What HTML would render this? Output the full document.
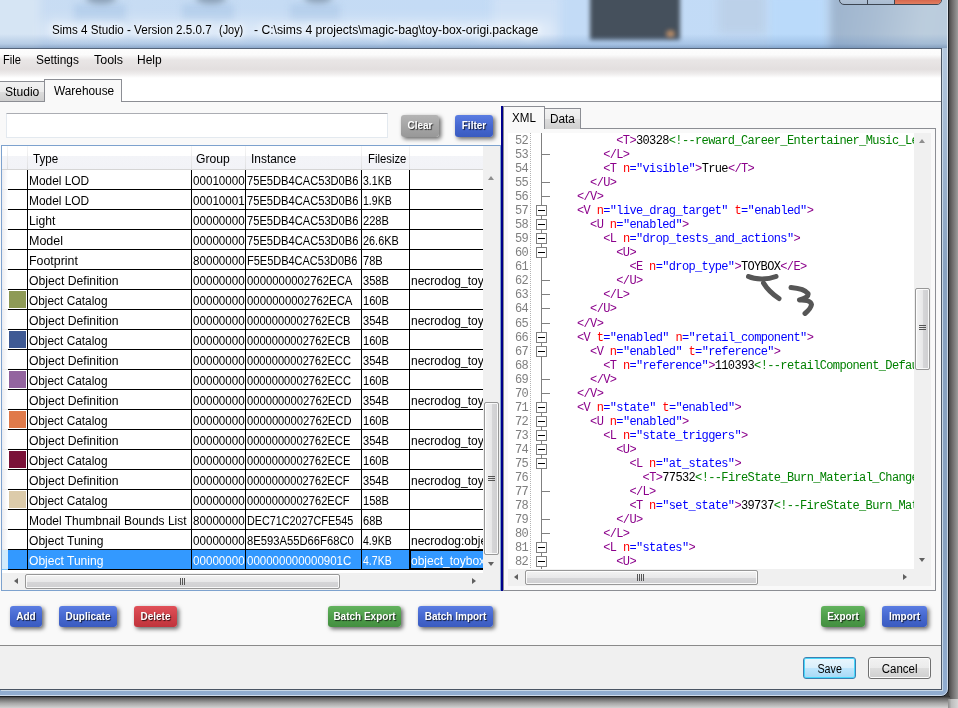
<!DOCTYPE html>
<html lang="en"><head><meta charset="utf-8"><title>Sims 4 Studio</title>
<style>
*{box-sizing:border-box}
html,body{margin:0;padding:0}
body{width:958px;height:708px;overflow:hidden;position:relative;background:#fff;font-family:"Liberation Sans",sans-serif;font-size:12px;color:#000}
.abs,.abs>div,.abs>span{position:absolute}
#root{position:absolute;left:0;top:0;width:958px;height:708px;overflow:hidden;will-change:transform}
#desk{left:0;top:0;width:958px;height:708px;background:#fdfdfd}
#shr{left:948px;top:0;width:10px;height:699px;background:linear-gradient(90deg,#404040,#6a6868 40%,#9c9c9c)}
#shb{left:0;top:696px;width:950px;height:12px;background:linear-gradient(180deg,#2a2a2a,#686868 22%,#a6a6a6 60%,#d2d2d2)}
#frame{left:-10px;top:-30px;width:959px;height:727px;border-radius:8px;border:1px solid #1b1f24;background:linear-gradient(180deg,#b9cde0 0,#b4c8de 78px,#88a2c0 300px,#88a2c0 80%,#91add0 100%);overflow:hidden}
#frame .in{left:0;top:0;right:0;bottom:0;border:1px solid rgba(255,255,255,.55);border-radius:7px}
#glass{left:0;top:0;width:947px;height:48px;overflow:hidden;background:linear-gradient(90deg,#c9ddf3 0,#c5dbf4 30%,#c3dbf6 60%,#c1dbf7 100%)}
.bl{filter:blur(5px)}
#title{left:52px;top:23px;white-space:pre;font-size:12px;line-height:15px;color:#000;text-shadow:0 0 6px #fff,0 0 10px #fff,0 0 14px #fff}
#capb{left:839px;top:-14px;width:103px;height:19px;border:1px solid #3d4652;border-radius:0 0 5px 5px;overflow:hidden;background:linear-gradient(180deg,#c9d6e6,#a9bbd0)}
#capb div{top:0;height:19px}
#client{left:0;top:48px;width:942px;height:642px;background:#f9f9f9;border-top:1px solid #56657a;border-right:1px solid #4a5564;border-bottom:1px solid #4a5564;box-shadow:1px 1px 0 #c8d8e6;overflow:hidden}
#menu{left:0;top:0;width:941px;height:29px;background:linear-gradient(180deg,#fdfdfd 0,#fbfbfb 20%,#e9e6e6 38%,#e3dfdf 70%,#eeecec 85%,#ffffff 100%)}
.mi{top:4px;line-height:15px;font-size:12px;white-space:pre}
#tabstrip{left:0;top:29px;width:941px;height:24px;background:#fff}
.tab{border:1px solid #8c8e94;border-bottom:none;font-size:12px;line-height:15px;white-space:pre}
.tab.off{background:linear-gradient(180deg,#f2f2f2 0,#ebebeb 50%,#dddddd 50%,#cfcfcf 100%)}
.tab.on{background:#f9f9f9}
.btn{height:21px;border-radius:3px;color:#fff;font-weight:bold;font-size:10px;line-height:21px;text-align:center;white-space:pre;box-shadow:2px 2px 4px rgba(0,0,0,.6);text-shadow:1px 1px 1px rgba(0,0,0,.75)}
.btn.b{background:linear-gradient(180deg,#5b7de2 0,#4668d0 50%,#3a5bc0 100%)}
.btn.r{background:linear-gradient(180deg,#e05058 0,#cf4048 50%,#c0343c 100%)}
.btn.gn{background:linear-gradient(180deg,#63b35e 0,#4f9e4b 50%,#438f40 100%)}
.btn.gy{background:linear-gradient(180deg,#b5b5b5 0,#a5a5a5 50%,#989898 100%)}
#grid{left:1px;top:96px;width:500px;height:446px;border:1px solid #7da2ce;background:#fff;overflow:hidden}
#ghead{left:0;top:0;width:481px;height:24px;background:linear-gradient(180deg,#fff 0,#fff 42%,#f3f4f8 43%,#f2f3f7 100%);border-bottom:1px solid #d5d5d5}
#ghead span{top:6px;line-height:15px;white-space:pre}
#ghead i{position:absolute;top:0;width:1px;height:23px;background:linear-gradient(180deg,#f6f6f6,#dedfe1)}
.row{left:0;width:481px;height:20px;overflow:hidden}
.row span{top:0;height:20px;line-height:20px;padding-top:1px;white-space:pre;border-right:1px solid #000;border-bottom:1px solid #000;padding-left:1px;overflow:hidden}
em{display:inline-block;font-style:normal;transform-origin:0 50%;white-space:pre}
.row .rh{left:0;width:6px;border-right:none;border-bottom:1px solid #ececec;background:linear-gradient(90deg,#ececf0,#f6f6f8 50%,#fff);padding:0}
.row .c0{left:6px;width:20px;padding:0}
.row .c1{left:26px;width:164px}
.row .c2{left:190px;width:54px;padding-left:0.5px}
.row .c3{left:244px;width:116px}
.row .c4{left:360px;width:48px}
.row .c5{left:408px;width:73px;border-right:none}
.row .sw{left:7px;top:1px;width:17px;height:17px;border:none;padding:0}
.row.sel span{background:#3399ff;color:#fff}
.row.sel .rh{background:#d2ebfb;border-bottom-color:#7fc4f5}
.sbv{background:#f0f0f0}
.thumbv{border:1px solid #979797;border-radius:2px;box-shadow:inset 0 0 0 1px rgba(255,255,255,.85);background:linear-gradient(90deg,#f3f3f3 0,#e8e8e9 50%,#d6d6d8 51%,#cfcfd1 100%)}
.thumbh{border:1px solid #979797;border-radius:2px;box-shadow:inset 0 0 0 1px rgba(255,255,255,.85);background:linear-gradient(180deg,#f3f3f3 0,#e8e8e9 50%,#d6d6d8 51%,#cfcfd1 100%)}
.tri{width:0;height:0;border:3.5px solid transparent}
#split{left:501px;top:57px;width:2px;height:485px;background:#00008b;box-shadow:1px 0 0 rgba(0,0,139,.3)}
#rpane{left:503px;top:79px;width:433px;height:463px;border:1px solid #8c8e94;background:#f9f9f9}
#ed{left:508px;top:84px;width:423px;height:453px;background:#fff;overflow:hidden}
#code{left:0;top:0;width:406px;height:436px;overflow:hidden;font-family:"Liberation Mono",monospace;font-size:12px;letter-spacing:-0.64px}
.ln{left:0;height:14px;line-height:14px;white-space:pre;width:900px}
.ln b{position:absolute;left:7px;top:0;font-weight:normal;color:#7f7f7f}
.ln s{position:absolute;left:0;top:0;text-decoration:none}
.g{color:#8b008b}.a{color:#ff0000}.v{color:#0000ff}.c{color:#008000}
.fb{left:28px;width:11px;height:11px;border:1px solid #808080;background:#fff}
.fb:after{content:"";position:absolute;left:1px;top:4px;width:7px;height:1px;background:#000}
.ft{left:33px;width:9px;height:1px;background:#808080}
#botbar{left:0;top:596px;width:941px;height:44px;background:#f0f0f0;border-top:1px solid #8a8a8a}
.wb{height:22px;border:1px solid #707070;border-radius:3px;font-size:12px;line-height:22px;text-align:center;background:linear-gradient(180deg,#f2f2f2 0,#ebebeb 48%,#dddddd 52%,#cfcfcf 100%);box-shadow:inset 0 0 0 1px #fcfcfc}
.wb em{transform-origin:50% 50%}
.wb.def{border-color:#3c7fb1;background:linear-gradient(180deg,#eaf6fd 0,#d9f0fc 48%,#bee6fd 52%,#a7d9f5 100%);box-shadow:inset 0 0 0 1px #48d8fb}
</style></head><body><div id="root">
<div id="desk" class="abs"></div>
<div id="shr" class="abs"></div>
<div id="shb" class="abs"></div>
<div class="abs" style="left:948px;top:699px;width:10px;height:9px;background:linear-gradient(90deg,#8c8c8c,#bdbdbd 35%,#d6d6d6)"></div>
<div class="abs" style="left:930px;top:680px;width:19px;height:17px;background:#3a3a3a"></div>
<div id="frame" class="abs"><div class="in"></div></div>
<div id="glass" class="abs">
<div class="bl" style="left:-10px;top:-10px;width:50px;height:70px;background:#d6e5f4"></div>
<div class="bl" style="left:74px;top:4px;width:52px;height:17px;background:#b5cfec;filter:blur(3px)"></div>
<div class="bl" style="left:86px;top:-8px;width:30px;height:12px;border-radius:50%;background:#8a9fb6;filter:blur(3px)"></div>
<div class="bl" style="left:182px;top:4px;width:52px;height:17px;background:#b5cfec;filter:blur(3px)"></div>
<div class="bl" style="left:196px;top:-8px;width:30px;height:12px;border-radius:50%;background:#8a9fb6;filter:blur(3px)"></div>
<div class="bl" style="left:290px;top:4px;width:50px;height:17px;background:#b5cfec;filter:blur(3px)"></div>
<div class="bl" style="left:304px;top:-8px;width:28px;height:11px;border-radius:50%;background:#8a9fb6;filter:blur(3px)"></div>
<div class="bl" style="left:492px;top:-5px;width:68px;height:48px;background:#cfe1f6;filter:blur(4px)"></div>
<div class="bl" style="left:718px;top:-8px;width:48px;height:42px;background:#bcd1e9;filter:blur(5px)"></div>
<div class="bl" style="left:770px;top:-8px;width:56px;height:64px;background:#badafa;filter:blur(4px)"></div>
<div class="bl" style="left:830px;top:-10px;width:130px;height:70px;background:linear-gradient(100deg,#9cb3cd 0,#a9bdd3 35%,#bccddd 70%,#b8cbdd 100%);filter:blur(4px)"></div>
<div class="bl" style="left:40px;top:20px;width:515px;height:22px;border-radius:11px;background:rgba(255,255,255,.38);filter:blur(7px)"></div>
<div class="bl" style="left:590px;top:-10px;width:90px;height:50px;background:#45505c;filter:blur(2px)"></div>
<div class="bl" style="left:666px;top:30px;width:9px;height:8px;border-radius:50%;background:#b58a66;filter:blur(2px)"></div>
<div style="left:0;top:34px;width:947px;height:14px;background:linear-gradient(180deg,rgba(110,150,200,0),rgba(100,140,190,.28) 70%,rgba(80,115,160,.5))"></div>
</div>
<div id="capb" class="abs"><div style="left:27px;width:1px;background:#3d4652"></div><div style="left:54px;width:1px;background:#3d4652"></div><div style="left:55px;width:48px;background:linear-gradient(180deg,#c8503a,#d8694e 70%,#e58a6a)"></div></div>
<div id="title" class="abs"><span style="left:0"><em style="transform:scaleX(0.969)">Sims 4 Studio - Version 2.5.0.7</em></span><span style="left:166.5px"><em style="transform:scaleX(0.908)">(Joy)</em></span><span style="left:201.5px"><em style="transform:scaleX(1.015)">- C:\sims 4 projects\magic-bag\toy-box-origi.package</em></span></div>
<div id="client" class="abs">
<div id="menu" class="abs"><span class="mi" style="left:3px"><em style="transform:scaleX(0.927)">File</em></span><span class="mi" style="left:36px"><em style="transform:scaleX(0.989)">Settings</em></span><span class="mi" style="left:94px"><em style="transform:scaleX(1.037)">Tools</em></span><span class="mi" style="left:137px"><em style="transform:scaleX(1.001)">Help</em></span></div>
<div id="tabstrip" class="abs"></div>
<div class="abs" style="left:0;top:52px;width:941px;height:1px;background:#8c8e94"></div>
<div class="abs tab off" style="left:-1px;top:32px;width:46px;height:20px;padding:3px 0 0 5px"><em style="transform:scaleX(1.008)">Studio</em></div>
<div class="abs tab on" style="left:44px;top:30px;width:78px;height:23px;padding:4px 0 0 8.5px"><em style="transform:scaleX(0.988)">Warehouse</em></div>
<div class="abs" style="left:6px;top:64px;width:382px;height:25px;background:#fff;border:1px solid #e3e9ef;border-top-color:#abadb3"></div>
<div class="abs btn gy" style="left:401px;top:66px;width:38px;height:22px;line-height:22px">Clear</div>
<div class="abs btn b" style="left:455px;top:66px;width:38px;height:22px;line-height:22px">Filter</div>
<div id="grid" class="abs">
<div id="ghead" class="abs"><i style="left:5px"></i><i style="left:25px"></i><i style="left:189px"></i><i style="left:243px"></i><i style="left:359px"></i><i style="left:407px"></i><span style="left:31px"><em style="transform:scaleX(0.967)">Type</em></span><span style="left:194px"><em style="transform:scaleX(1.011)">Group</em></span><span style="left:249px"><em style="transform:scaleX(0.992)">Instance</em></span><span style="left:366px"><em style="transform:scaleX(0.943)">Filesize</em></span></div>
<div class="abs row" style="top:24px"><span class="rh"></span><span class="c0"></span><span class="c1"><em style="transform:scaleX(0.992)">Model LOD</em></span><span class="c2"><em style="transform:scaleX(0.968)">00010000</em></span><span class="c3"><em style="transform:scaleX(0.928)">75E5DB4CAC53D0B6</em></span><span class="c4"><em style="transform:scaleX(0.877)">3.1KB</em></span><span class="c5"></span></div>
<div class="abs row" style="top:44px"><span class="rh"></span><span class="c0"></span><span class="c1"><em style="transform:scaleX(0.992)">Model LOD</em></span><span class="c2"><em style="transform:scaleX(0.968)">00010001</em></span><span class="c3"><em style="transform:scaleX(0.928)">75E5DB4CAC53D0B6</em></span><span class="c4"><em style="transform:scaleX(0.877)">1.9KB</em></span><span class="c5"></span></div>
<div class="abs row" style="top:64px"><span class="rh"></span><span class="c0"></span><span class="c1"><em style="transform:scaleX(1.011)">Light</em></span><span class="c2"><em style="transform:scaleX(0.968)">00000000</em></span><span class="c3"><em style="transform:scaleX(0.928)">75E5DB4CAC53D0B6</em></span><span class="c4"><em style="transform:scaleX(0.925)">228B</em></span><span class="c5"></span></div>
<div class="abs row" style="top:84px"><span class="rh"></span><span class="c0"></span><span class="c1"><em style="transform:scaleX(1.042)">Model</em></span><span class="c2"><em style="transform:scaleX(0.968)">00000000</em></span><span class="c3"><em style="transform:scaleX(0.928)">75E5DB4CAC53D0B6</em></span><span class="c4"><em style="transform:scaleX(0.907)">26.6KB</em></span><span class="c5"></span></div>
<div class="abs row" style="top:104px"><span class="rh"></span><span class="c0"></span><span class="c1"><em style="transform:scaleX(1.033)">Footprint</em></span><span class="c2"><em style="transform:scaleX(0.968)">80000000</em></span><span class="c3"><em style="transform:scaleX(0.915)">F5E5DB4CAC53D0B6</em></span><span class="c4"><em style="transform:scaleX(0.924)">78B</em></span><span class="c5"></span></div>
<div class="abs row" style="top:124px"><span class="rh"></span><span class="c0"></span><span class="c1"><em style="transform:scaleX(1.017)">Object Definition</em></span><span class="c2"><em style="transform:scaleX(0.968)">00000000</em></span><span class="c3"><em style="transform:scaleX(0.946)">0000000002762ECA</em></span><span class="c4"><em style="transform:scaleX(0.925)">358B</em></span><span class="c5">necrodog_toy</span></div>
<div class="abs row" style="top:144px"><span class="rh"></span><span class="c0"></span><span class="sw" style="background:#8e9a56"></span><span class="c1"><em style="transform:scaleX(0.990)">Object Catalog</em></span><span class="c2"><em style="transform:scaleX(0.968)">00000000</em></span><span class="c3"><em style="transform:scaleX(0.946)">0000000002762ECA</em></span><span class="c4"><em style="transform:scaleX(0.925)">160B</em></span><span class="c5"></span></div>
<div class="abs row" style="top:164px"><span class="rh"></span><span class="c0"></span><span class="c1"><em style="transform:scaleX(1.017)">Object Definition</em></span><span class="c2"><em style="transform:scaleX(0.968)">00000000</em></span><span class="c3"><em style="transform:scaleX(0.928)">0000000002762ECB</em></span><span class="c4"><em style="transform:scaleX(0.925)">354B</em></span><span class="c5">necrodog_toy</span></div>
<div class="abs row" style="top:184px"><span class="rh"></span><span class="c0"></span><span class="sw" style="background:#3f5a94"></span><span class="c1"><em style="transform:scaleX(0.990)">Object Catalog</em></span><span class="c2"><em style="transform:scaleX(0.968)">00000000</em></span><span class="c3"><em style="transform:scaleX(0.928)">0000000002762ECB</em></span><span class="c4"><em style="transform:scaleX(0.925)">160B</em></span><span class="c5"></span></div>
<div class="abs row" style="top:204px"><span class="rh"></span><span class="c0"></span><span class="c1"><em style="transform:scaleX(1.017)">Object Definition</em></span><span class="c2"><em style="transform:scaleX(0.968)">00000000</em></span><span class="c3"><em style="transform:scaleX(0.927)">0000000002762ECC</em></span><span class="c4"><em style="transform:scaleX(0.925)">354B</em></span><span class="c5">necrodog_toy</span></div>
<div class="abs row" style="top:224px"><span class="rh"></span><span class="c0"></span><span class="sw" style="background:#93649f"></span><span class="c1"><em style="transform:scaleX(0.990)">Object Catalog</em></span><span class="c2"><em style="transform:scaleX(0.968)">00000000</em></span><span class="c3"><em style="transform:scaleX(0.927)">0000000002762ECC</em></span><span class="c4"><em style="transform:scaleX(0.925)">160B</em></span><span class="c5"></span></div>
<div class="abs row" style="top:244px"><span class="rh"></span><span class="c0"></span><span class="c1"><em style="transform:scaleX(1.017)">Object Definition</em></span><span class="c2"><em style="transform:scaleX(0.968)">00000000</em></span><span class="c3"><em style="transform:scaleX(0.932)">0000000002762ECD</em></span><span class="c4"><em style="transform:scaleX(0.925)">354B</em></span><span class="c5">necrodog_toy</span></div>
<div class="abs row" style="top:264px"><span class="rh"></span><span class="c0"></span><span class="sw" style="background:#e07a4a"></span><span class="c1"><em style="transform:scaleX(0.990)">Object Catalog</em></span><span class="c2"><em style="transform:scaleX(0.968)">00000000</em></span><span class="c3"><em style="transform:scaleX(0.932)">0000000002762ECD</em></span><span class="c4"><em style="transform:scaleX(0.925)">160B</em></span><span class="c5"></span></div>
<div class="abs row" style="top:284px"><span class="rh"></span><span class="c0"></span><span class="c1"><em style="transform:scaleX(1.017)">Object Definition</em></span><span class="c2"><em style="transform:scaleX(0.968)">00000000</em></span><span class="c3"><em style="transform:scaleX(0.927)">0000000002762ECE</em></span><span class="c4"><em style="transform:scaleX(0.925)">354B</em></span><span class="c5">necrodog_toy</span></div>
<div class="abs row" style="top:304px"><span class="rh"></span><span class="c0"></span><span class="sw" style="background:#7a1238"></span><span class="c1"><em style="transform:scaleX(0.990)">Object Catalog</em></span><span class="c2"><em style="transform:scaleX(0.968)">00000000</em></span><span class="c3"><em style="transform:scaleX(0.927)">0000000002762ECE</em></span><span class="c4"><em style="transform:scaleX(0.925)">160B</em></span><span class="c5"></span></div>
<div class="abs row" style="top:324px"><span class="rh"></span><span class="c0"></span><span class="c1"><em style="transform:scaleX(1.017)">Object Definition</em></span><span class="c2"><em style="transform:scaleX(0.968)">00000000</em></span><span class="c3"><em style="transform:scaleX(0.926)">0000000002762ECF</em></span><span class="c4"><em style="transform:scaleX(0.925)">354B</em></span><span class="c5">necrodog_toy</span></div>
<div class="abs row" style="top:344px"><span class="rh"></span><span class="c0"></span><span class="sw" style="background:#dccbaa"></span><span class="c1"><em style="transform:scaleX(0.990)">Object Catalog</em></span><span class="c2"><em style="transform:scaleX(0.968)">00000000</em></span><span class="c3"><em style="transform:scaleX(0.926)">0000000002762ECF</em></span><span class="c4"><em style="transform:scaleX(0.925)">158B</em></span><span class="c5"></span></div>
<div class="abs row" style="top:364px"><span class="rh"></span><span class="c0"></span><span class="c1"><em style="transform:scaleX(0.998)">Model Thumbnail Bounds List</em></span><span class="c2"><em style="transform:scaleX(0.968)">80000000</em></span><span class="c3"><em style="transform:scaleX(0.899)">DEC71C2027CFE545</em></span><span class="c4"><em style="transform:scaleX(0.924)">68B</em></span><span class="c5"></span></div>
<div class="abs row" style="top:384px"><span class="rh"></span><span class="c0"></span><span class="c1"><em style="transform:scaleX(1.005)">Object Tuning</em></span><span class="c2"><em style="transform:scaleX(0.968)">00000000</em></span><span class="c3"><em style="transform:scaleX(0.936)">8E593A55D66F68C0</em></span><span class="c4"><em style="transform:scaleX(0.877)">4.9KB</em></span><span class="c5">necrodog:obje</span></div>
<div class="abs row sel" style="top:404px"><span class="rh"></span><span class="c0"></span><span class="c1"><em style="transform:scaleX(1.005)">Object Tuning</em></span><span class="c2"><em style="transform:scaleX(0.968)">00000000</em></span><span class="c3"><em style="transform:scaleX(0.959)">000000000000901C</em></span><span class="c4"><em style="transform:scaleX(0.877)">4.7KB</em></span><span class="c5">object_toybox</span></div>
<div style="left:407px;top:403px;width:74px;height:21px;border:2px solid #000;border-right:none"></div>
<div class="sbv" style="left:481px;top:0;width:17px;height:427px"></div>
<div class="tri" style="left:486px;top:30px;border-bottom:4px solid #8e8e8e;border-top:none"></div>
<div class="tri" style="left:486px;top:416px;border-top:4px solid #606060;border-bottom:none"></div>
<div class="thumbv" style="left:482px;top:256px;width:15px;height:153px"></div>
<div style="left:486px;top:330px;width:7px;height:1px;background:#555;box-shadow:0 2px 0 #555,0 4px 0 #555"></div>
<div class="sbv" style="left:0;top:427px;width:499px;height:18px"></div>
<div class="tri" style="left:12px;top:432px;border-right:4px solid #606060;border-left:none"></div>
<div class="tri" style="left:470px;top:432px;border-left:4px solid #606060;border-right:none"></div>
<div class="thumbh" style="left:23px;top:428px;width:315px;height:15px"></div>
<div style="left:178px;top:432px;width:1px;height:7px;background:#555;box-shadow:2px 0 0 #555,4px 0 0 #555"></div>
</div>
<div id="split" class="abs"></div>
<div id="rpane" class="abs"></div>
<div class="abs tab off" style="left:544px;top:59px;width:37px;height:21px;padding:3px 0 0 5px"><em style="transform:scaleX(0.982)">Data</em></div>
<div class="abs tab on" style="left:503px;top:57px;width:42px;height:23px;padding:4px 0 0 8px"><em style="transform:scaleX(0.967)">XML</em></div>
<div id="ed" class="abs"><div id="code" class="abs">
<div style="left:22px;top:0;width:1px;height:436px;background:repeating-linear-gradient(180deg,#b4b4b4 0,#b4b4b4 1px,#fff 1px,#fff 2px)"></div>
<div style="left:33px;top:0;width:1px;height:436px;background:#808080"></div>
<div class="ln" style="top:1px"><b>52</b><s style="left:108.3px"><span class="g">&lt;T&gt;</span>30328<span class="c">&lt;!--reward_Career_Entertainer_Music_Level3--&gt;</span><span class="g">&lt;/T&gt;</span></s></div>
<div class="ft" style="top:21px"></div>
<div class="ln" style="top:15px"><b>53</b><s style="left:95.2px"><span class="g">&lt;/L&gt;</span></s></div>
<div class="ln" style="top:29px"><b>54</b><s style="left:95.2px"><span class="g">&lt;T </span><span class="a">n</span><span class="v">="visible"</span><span class="g">&gt;</span>True<span class="g">&lt;/T&gt;</span></s></div>
<div class="ft" style="top:49px"></div>
<div class="ln" style="top:43px"><b>55</b><s style="left:82.1px"><span class="g">&lt;/U&gt;</span></s></div>
<div class="ft" style="top:63px"></div>
<div class="ln" style="top:57px"><b>56</b><s style="left:69.0px"><span class="g">&lt;/V&gt;</span></s></div>
<div class="fb" style="top:72px"></div>
<div class="ln" style="top:71px"><b>57</b><s style="left:69.0px"><span class="g">&lt;V </span><span class="a">n</span><span class="v">="live_drag_target"</span> <span class="a">t</span><span class="v">="enabled"</span><span class="g">&gt;</span></s></div>
<div class="fb" style="top:86px"></div>
<div class="ln" style="top:85px"><b>58</b><s style="left:82.1px"><span class="g">&lt;U </span><span class="a">n</span><span class="v">="enabled"</span><span class="g">&gt;</span></s></div>
<div class="fb" style="top:100px"></div>
<div class="ln" style="top:99px"><b>59</b><s style="left:95.2px"><span class="g">&lt;L </span><span class="a">n</span><span class="v">="drop_tests_and_actions"</span><span class="g">&gt;</span></s></div>
<div class="fb" style="top:114px"></div>
<div class="ln" style="top:113px"><b>60</b><s style="left:108.3px"><span class="g">&lt;U&gt;</span></s></div>
<div class="ln" style="top:127px"><b>61</b><s style="left:121.4px"><span class="g">&lt;E </span><span class="a">n</span><span class="v">="drop_type"</span><span class="g">&gt;</span>TOYBOX<span class="g">&lt;/E&gt;</span></s></div>
<div class="ft" style="top:147px"></div>
<div class="ln" style="top:141px"><b>62</b><s style="left:108.3px"><span class="g">&lt;/U&gt;</span></s></div>
<div class="ft" style="top:161px"></div>
<div class="ln" style="top:155px"><b>63</b><s style="left:95.2px"><span class="g">&lt;/L&gt;</span></s></div>
<div class="ft" style="top:175px"></div>
<div class="ln" style="top:169px"><b>64</b><s style="left:82.1px"><span class="g">&lt;/U&gt;</span></s></div>
<div class="ft" style="top:190px"></div>
<div class="ln" style="top:184px"><b>65</b><s style="left:69.0px"><span class="g">&lt;/V&gt;</span></s></div>
<div class="fb" style="top:199px"></div>
<div class="ln" style="top:198px"><b>66</b><s style="left:69.0px"><span class="g">&lt;V </span><span class="a">t</span><span class="v">="enabled"</span> <span class="a">n</span><span class="v">="retail_component"</span><span class="g">&gt;</span></s></div>
<div class="fb" style="top:213px"></div>
<div class="ln" style="top:212px"><b>67</b><s style="left:82.1px"><span class="g">&lt;V </span><span class="a">n</span><span class="v">="enabled"</span> <span class="a">t</span><span class="v">="reference"</span><span class="g">&gt;</span></s></div>
<div class="ln" style="top:226px"><b>68</b><s style="left:95.2px"><span class="g">&lt;T </span><span class="a">n</span><span class="v">="reference"</span><span class="g">&gt;</span>110393<span class="c">&lt;!--retailComponent_Default--&gt;</span><span class="g">&lt;/T&gt;</span></s></div>
<div class="ft" style="top:246px"></div>
<div class="ln" style="top:240px"><b>69</b><s style="left:82.1px"><span class="g">&lt;/V&gt;</span></s></div>
<div class="ft" style="top:260px"></div>
<div class="ln" style="top:254px"><b>70</b><s style="left:69.0px"><span class="g">&lt;/V&gt;</span></s></div>
<div class="fb" style="top:269px"></div>
<div class="ln" style="top:268px"><b>71</b><s style="left:69.0px"><span class="g">&lt;V </span><span class="a">n</span><span class="v">="state"</span> <span class="a">t</span><span class="v">="enabled"</span><span class="g">&gt;</span></s></div>
<div class="fb" style="top:283px"></div>
<div class="ln" style="top:282px"><b>72</b><s style="left:82.1px"><span class="g">&lt;U </span><span class="a">n</span><span class="v">="enabled"</span><span class="g">&gt;</span></s></div>
<div class="fb" style="top:297px"></div>
<div class="ln" style="top:296px"><b>73</b><s style="left:95.2px"><span class="g">&lt;L </span><span class="a">n</span><span class="v">="state_triggers"</span><span class="g">&gt;</span></s></div>
<div class="fb" style="top:311px"></div>
<div class="ln" style="top:310px"><b>74</b><s style="left:108.3px"><span class="g">&lt;U&gt;</span></s></div>
<div class="fb" style="top:325px"></div>
<div class="ln" style="top:324px"><b>75</b><s style="left:121.4px"><span class="g">&lt;L </span><span class="a">n</span><span class="v">="at_states"</span><span class="g">&gt;</span></s></div>
<div class="ln" style="top:338px"><b>76</b><s style="left:134.6px"><span class="g">&lt;T&gt;</span>77532<span class="c">&lt;!--FireState_Burn_Material_Changed--&gt;</span><span class="g">&lt;/T&gt;</span></s></div>
<div class="ft" style="top:358px"></div>
<div class="ln" style="top:352px"><b>77</b><s style="left:121.4px"><span class="g">&lt;/L&gt;</span></s></div>
<div class="ln" style="top:366px"><b>78</b><s style="left:121.4px"><span class="g">&lt;T </span><span class="a">n</span><span class="v">="set_state"</span><span class="g">&gt;</span>39737<span class="c">&lt;!--FireState_Burn_Material--&gt;</span><span class="g">&lt;/T&gt;</span></s></div>
<div class="ft" style="top:386px"></div>
<div class="ln" style="top:380px"><b>79</b><s style="left:108.3px"><span class="g">&lt;/U&gt;</span></s></div>
<div class="ft" style="top:400px"></div>
<div class="ln" style="top:394px"><b>80</b><s style="left:95.2px"><span class="g">&lt;/L&gt;</span></s></div>
<div class="fb" style="top:409px"></div>
<div class="ln" style="top:408px"><b>81</b><s style="left:95.2px"><span class="g">&lt;L </span><span class="a">n</span><span class="v">="states"</span><span class="g">&gt;</span></s></div>
<div class="fb" style="top:423px"></div>
<div class="ln" style="top:422px"><b>82</b><s style="left:108.3px"><span class="g">&lt;U&gt;</span></s></div>
</div>
<svg style="position:absolute;left:0;top:0;filter:blur(.6px)" width="406" height="436" viewBox="0 0 406 436"><g fill="none" stroke="#565656" stroke-width="5" stroke-linecap="round" stroke-linejoin="round"><path d="M240.5 143.5 C247 146.5 259 147 268 143.5"/><path d="M255.5 150 C259 156 265 161.5 271 165.5"/><path d="M283 154.5 C289 155 297 156.5 300 160.5 C301 164 295 166 291.5 167 C297 166.5 303 168 303.5 171.5 C303 175 300 178 297 180.5"/></g></svg>
<div class="sbv" style="left:406px;top:0;width:17px;height:436px"></div>
<div class="tri" style="left:411px;top:6px;border-bottom:4px solid #8e8e8e;border-top:none"></div>
<div class="tri" style="left:411px;top:425px;border-top:4px solid #606060;border-bottom:none"></div>
<div class="thumbv" style="left:407px;top:155px;width:15px;height:82px"></div>
<div style="left:411px;top:192px;width:7px;height:1px;background:#555;box-shadow:0 2px 0 #555,0 4px 0 #555"></div>
<div class="sbv" style="left:0;top:436px;width:423px;height:17px"></div>
<div class="tri" style="left:6px;top:441px;border-right:4px solid #606060;border-left:none"></div>
<div class="tri" style="left:395px;top:441px;border-left:4px solid #606060;border-right:none"></div>
<div class="thumbh" style="left:17px;top:437px;width:233px;height:15px"></div>
<div style="left:129px;top:441px;width:1px;height:7px;background:#555;box-shadow:2px 0 0 #555,4px 0 0 #555,6px 0 0 #555"></div>
</div>
<div class="abs btn b" style="left:10px;top:557px;width:32px">Add</div>
<div class="abs btn b" style="left:59px;top:557px;width:58px">Duplicate</div>
<div class="abs btn r" style="left:134px;top:557px;width:43px">Delete</div>
<div class="abs btn gn" style="left:328px;top:557px;width:73px">Batch Export</div>
<div class="abs btn b" style="left:418px;top:557px;width:75px">Batch Import</div>
<div class="abs btn gn" style="left:821px;top:557px;width:44px">Export</div>
<div class="abs btn b" style="left:882px;top:557px;width:45px">Import</div>
<div id="botbar" class="abs"><div class="wb def" style="left:803px;top:11px;width:53px"><em style="transform:scaleX(0.896)">Save</em></div><div class="wb" style="left:868px;top:11px;width:63px"><em style="transform:scaleX(0.957)">Cancel</em></div></div>
</div>
</div></body></html>
